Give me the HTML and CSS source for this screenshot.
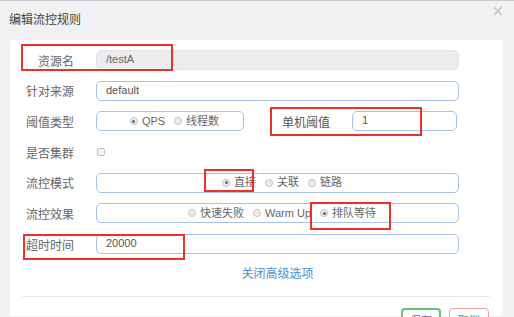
FILE: index.html
```html
<!DOCTYPE html>
<html lang="zh-CN">

<head>
    <meta charset="UTF-8">
    <title>编辑流控规则</title>
    <link rel="stylesheet" href="styles.css">
</head>

<body>

    <div class="dialog">
        <div class="dialog-header">
            <h3>编辑流控规则</h3>
            <span class="close">&times;</span>
        </div>

        <div class="dialog-body">
            <form class="rule-form">
                <div class="form-row">
                    <label>资源名</label>
                    <div class="field disabled">/testA</div>
                    <span class="mark mark-resource"></span>
                </div>

                <div class="form-row">
                    <label>针对来源</label>
                    <div class="field">default</div>
                </div>

                <div class="form-row">
                    <label>阈值类型</label>
                    <div class="field radios narrow">
                        <span class="radio checked"></span>QPS
                        <span class="radio"></span>线程数
                    </div>
                    <label class="inline-label">单机阈值</label>
                    <div class="field small">1</div>
                    <span class="mark mark-count"></span>
                </div>

                <div class="form-row">
                    <label>是否集群</label>
                    <span class="checkbox"></span>
                </div>

                <div class="form-row">
                    <label>流控模式</label>
                    <div class="field radios">
                        <span class="radio checked"></span>直接
                        <span class="radio"></span>关联
                        <span class="radio"></span>链路
                    </div>
                    <span class="mark mark-mode"></span>
                </div>

                <div class="form-row">
                    <label>流控效果</label>
                    <div class="field radios">
                        <span class="radio"></span>快速失败
                        <span class="radio"></span>Warm Up
                        <span class="radio checked"></span>排队等待
                    </div>
                    <span class="mark mark-effect"></span>
                </div>

                <div class="form-row">
                    <label>超时时间</label>
                    <div class="field">20000</div>
                    <span class="mark mark-timeout"></span>
                </div>
            </form>

            <a class="toggle-link">关闭高级选项</a>

            <div class="dialog-footer">
                <button class="btn btn-save">保存</button>
                <button class="btn btn-cancel">取消</button>
            </div>
        </div>
    </div>

</body>

</html>
```

FILE: styles.css
```css
body {
    margin: 0;
    font-family: "Noto Sans CJK SC", "Liberation Sans", sans-serif;
    background-color: #f1f1f3;
    color: #666;
    font-size: 12px;
    overflow: hidden;
}

.dialog {
    border-top: 1px solid #c8c8cc;
    height: 316px;
}

.dialog-header {
    display: flex;
    justify-content: space-between;
    align-items: flex-start;
    padding: 0 10px 0 9px;
    height: 39px;
}

.dialog-header h3 {
    margin: 9px 0 0;
    font-size: 12px;
    font-weight: normal;
    color: #444;
}

.close {
    margin-top: 1px;
    font-family: "DejaVu Sans", sans-serif;
    font-size: 15px;
    color: #c4c4c4;
}

.dialog-body {
    background: white;
    margin: 0 11px 0 10px;
    padding: 10px 0 0 12px;
    height: 266px;
    border-radius: 3px 3px 0 0;
}

.rule-form {
    display: flex;
    flex-direction: column;
    gap: 10.7px;
}

.form-row {
    position: relative;
    display: flex;
    align-items: center;
    height: 20px;
}

.form-row label {
    width: 52px;
    text-align: right;
    margin-right: 22px;
    font-size: 12px;
    color: #666;
    flex-shrink: 0;
}

.field {
    box-sizing: border-box;
    width: 363px;
    height: 20px;
    border: 1px solid #a9c2e3;
    border-radius: 5px;
    padding: 0 0 0 9px;
    line-height: 17px;
    font-size: 11px;
    color: #555;
    font-family: "Liberation Sans", "Noto Sans CJK SC", sans-serif;
}

.field.disabled {
    background: #ececee;
    border-color: #e2e2e4;
    color: #666;
}

.field.narrow {
    width: 148px;
}

.field.small {
    width: 105px;
}

.form-row .inline-label {
    margin-left: 34px;
    color: #555;
}

.radios {
    display: flex;
    justify-content: center;
    align-items: center;
    padding: 0;
    font-family: "Liberation Sans", "Noto Sans CJK SC", sans-serif;
    font-size: 11px;
    color: #666;
}

.radio {
    box-sizing: border-box;
    display: inline-block;
    width: 8px;
    height: 8px;
    border-radius: 50%;
    border: 1px solid #c3c3c3;
    background: #eee;
    margin: 0 4px 0 9px;
    position: relative;
}

.radio.checked::after {
    content: "";
    position: absolute;
    left: 1.5px;
    top: 1.5px;
    width: 3px;
    height: 3px;
    border-radius: 50%;
    background: #666;
}

.checkbox {
    box-sizing: border-box;
    display: inline-block;
    width: 8px;
    height: 8px;
    margin-left: 1px;
    border: 1px solid #c3c3c3;
    border-radius: 2px;
    background: #f2f2f2;
}

/* red annotation boxes drawn over the form */
.mark {
    position: absolute;
    border: 2px solid #f02e26;
    box-sizing: border-box;
    pointer-events: none;
}

.mark-resource {
    left: -1px;
    top: -6px;
    width: 152px;
    height: 27px;
}

.mark-count {
    left: 248px;
    top: -4px;
    width: 152px;
    height: 29px;
}

.mark-mode {
    left: 182px;
    top: -4px;
    width: 50px;
    height: 23px;
}

.mark-effect {
    left: 288px;
    top: -1px;
    width: 81px;
    height: 28px;
}

.mark-timeout {
    left: 1px;
    top: 0;
    width: 162px;
    height: 26px;
}

.toggle-link {
    display: block;
    width: 363px;
    margin: 10px 0 0 74px;
    text-align: center;
    color: #4a8fd6;
    font-size: 12px;
}

.dialog-footer {
    border-top: 1px solid #eaeaea;
    margin: 15px 0 0 0;
    width: 468px;
    display: flex;
    justify-content: flex-end;
    gap: 8px;
    padding-top: 11px;
}

.btn {
    width: 40px;
    height: 24px;
    background: white;
    border-radius: 4px;
    font-size: 11px;
    color: #777;
    font-family: "Noto Sans CJK SC", sans-serif;
    padding: 0;
}

.btn-save {
    border: 2px solid #6cbf73;
}

.btn-cancel {
    border: 1px solid #e6a3a3;
    margin-right: 1px;
}
```
